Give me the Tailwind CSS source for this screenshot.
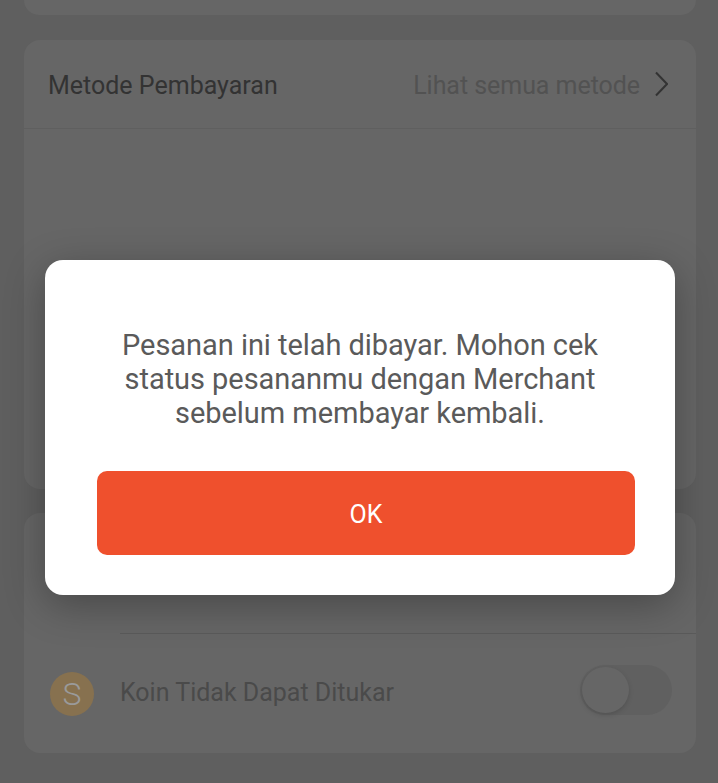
<!DOCTYPE html>
<html>
<head>
<meta charset="utf-8">
<script src="https://cdn.jsdelivr.net/npm/@tailwindcss/browser@4"></script>
</head>
<body class="m-0 bg-[#5f5f5f]">
<div class="relative w-[718px] h-[783px] overflow-hidden bg-[#5f5f5f] font-['Roboto',sans-serif]">
  <div class="flex flex-col pl-6 pr-[22px]">
    <div class="h-[15px] rounded-b-2xl bg-[#666666]"></div>
    <section class="mt-[25px] h-[449px] rounded-2xl bg-[#666666]">
      <div class="flex h-[89px] items-center justify-between border-b border-[#5f5f5f] pl-6 pr-[28px]">
        <span class="pt-[3px] text-[25px] text-[#333333]">Metode Pembayaran</span>
        <div class="flex items-center gap-[15px]">
          <span class="pt-[3px] text-[25px] tracking-[-0.05px] text-[#525252]">Lihat semua metode</span>
          <svg class="h-[26px] w-[13px]" viewBox="0 0 13 26" fill="none" stroke="#333333" stroke-width="2"><path d="M1 1.5 12 13 1 24.5"/></svg>
        </div>
      </div>
    </section>
    <section class="mt-6 flex h-[240px] flex-col rounded-2xl bg-[#666666]">
      <div class="ml-24 mt-[120px] border-t border-[#5a5a5a]"></div>
      <div class="flex flex-1 items-center justify-between pl-[26px] pr-6">
        <div class="flex items-center gap-[26px]">
          <div class="flex h-11 w-11 items-center justify-center rounded-full bg-[#87714f] text-[32px] font-light text-[#9a9a9a]">S</div>
          <span class="mb-[2px] text-[25px] text-[#4a4a4a]">Koin Tidak Dapat Ditukar</span>
        </div>
        <div class="mb-[8px] flex h-[50px] w-[92px] items-center rounded-full bg-[#606060] pl-[2px]">
          <div class="h-[46px] w-[47px] rounded-full bg-[#666666] shadow-[0_2px_5px_rgba(0,0,0,0.15)]"></div>
        </div>
      </div>
    </section>
  </div>

  <div class="absolute left-[45px] top-[260px] flex h-[335px] w-[630px] flex-col rounded-[18px] bg-white pl-[52px] pr-[40px] pt-[68px] shadow-[0_10px_40px_rgba(0,0,0,0.3)]">
    <p class="mr-3 whitespace-nowrap text-center text-[29px] leading-[34px] tracking-[-0.05px] text-[#5a5a5a]">Pesanan ini telah dibayar. Mohon cek<br>status pesananmu dengan Merchant<br>sebelum membayar kembali.</p>
    <button class="mt-[41px] flex h-[84px] w-full items-center justify-center rounded-[10px] bg-[#ef502d] pt-[3px] text-[25px] text-white">OK</button>
  </div>
</div>
</body>
</html>
